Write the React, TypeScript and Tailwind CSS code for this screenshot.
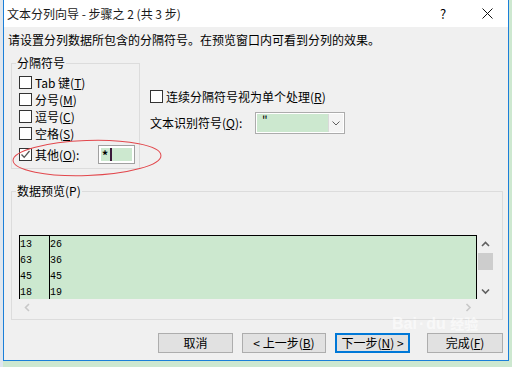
import { type ReactNode } from 'react'

const cjk = "font-['Noto_Sans_CJK_SC',sans-serif]"

function Box({ checked = false }: { checked?: boolean }) {
  return (
    <span className="flex h-[13px] w-[13px] shrink-0 items-center justify-center border border-[#333333] bg-white">
      {checked && (
        <svg width="11" height="11" viewBox="0 0 11 11">
          <path d="M1.5 5.5 L4.2 8.3 L9.5 2" fill="none" stroke="#555555" strokeWidth="1.3" />
        </svg>
      )}
    </span>
  )
}

function Check({ children, checked }: { children: ReactNode; checked?: boolean }) {
  return (
    <div className="flex h-[17px] items-center gap-[3px]">
      <Box checked={checked} />
      <span className="leading-[17px]">{children}</span>
    </div>
  )
}

function Group({ title, className, children }: { title: string; className: string; children: ReactNode }) {
  return (
    <div className={`relative border border-[#dcdcdc] ${className}`}>
      <span className="absolute -top-[9px] left-[4px] bg-[#f0f0f0] px-[1px] leading-[16px]">{title}</span>
      {children}
    </div>
  )
}

function Btn({ children, className = '', focused = false }: { children: ReactNode; className?: string; focused?: boolean }) {
  return (
    <div
      className={`flex h-[20px] items-center justify-center bg-[#e1e1e1] leading-[16px] ${
        focused ? 'border-2 border-[#0078d7]' : 'border border-[#adadad]'
      } ${className}`}
    >
      {children}
    </div>
  )
}

function Chevron({ dir, color = '#606060' }: { dir: 'up' | 'down' | 'left' | 'right'; color?: string }) {
  const d = {
    up: 'M1 6 L4.5 2.5 L8 6',
    down: 'M1 2.5 L4.5 6 L8 2.5',
    left: 'M6 1 L2.5 4.5 L6 8',
    right: 'M2.5 1 L6 4.5 L2.5 8',
  }[dir]
  return (
    <svg width="9" height="9" viewBox="0 0 9 9">
      <path d={d} fill="none" stroke={color} strokeWidth="1.6" />
    </svg>
  )
}

const rows = [
  ['13', '26'],
  ['63', '36'],
  ['45', '45'],
  ['18', '19'],
]

export default function App() {
  return (
    <div className={`relative flex h-[367px] w-[512px] overflow-hidden bg-[#cde8d0] text-[12px] text-black ${cjk}`}>
      <div className="w-[3px] shrink-0 bg-[#dfe6ee]" />
      <div className="flex h-[361px] w-[506px] shrink-0 flex-col border-x border-b border-[#1b7fd8] bg-[#f0f0f0]">
        <div className="flex h-[27px] items-center bg-white pl-[3px]">
          <span className="flex-1 leading-[16px] text-[#1a1a1a]">文本分列向导 - 步骤之 2 (共 3 步)</span>
          <span className="flex w-[46px] justify-center text-[13px]">?</span>
          <span className="flex w-[42px] justify-center">
            <svg width="11" height="11" viewBox="0 0 11 11">
              <path d="M0.5 0.5 L10.5 10.5 M10.5 0.5 L0.5 10.5" stroke="#111111" strokeWidth="1" />
            </svg>
          </span>
        </div>

        <p className="ml-[4px] mt-[5px] leading-[16px]">请设置分列数据所包含的分隔符号。在预览窗口内可看到分列的效果。</p>

        <div className="mt-[15px] flex">
          <Group title="分隔符号" className="ml-[7px] h-[106px] w-[129px] pl-[7px] pt-[10px]">
            <Check>
              Tab 键(<span className="underline">T</span>)
            </Check>
            <Check>
              分号(<span className="underline">M</span>)
            </Check>
            <Check>
              逗号(<span className="underline">C</span>)
            </Check>
            <Check>
              空格(<span className="underline">S</span>)
            </Check>
            <div className="mt-[3px] flex h-[19px] items-center gap-[3px]">
              <Box checked />
              <span className="w-[60px] leading-[17px]">
                其他(<span className="underline">O</span>):
              </span>
              <div className="flex h-[19px] w-[37px] border border-[#a0a0a0] bg-white p-[2px]">
                <div className="flex flex-1 items-center bg-[#cce8cf] pl-[1px] leading-[13px]">
                  <span className="font-bold">*</span>
                  <span className="ml-[2px] h-[13px] w-[2px] bg-[#3a1a3a]" />
                </div>
              </div>
            </div>
          </Group>

          <div className="ml-[10px] pt-[25px]">
            <Check>
              连续分隔符号视为单个处理(<span className="underline">R</span>)
            </Check>
            <div className="mt-[7px] flex items-center">
              <span className="w-[105px] leading-[16px]">
                文本识别符号(<span className="underline">Q</span>):
              </span>
              <div className="flex h-[22px] w-[90px] border border-[#acacac] bg-white p-[1px]">
                <div className="flex-1 bg-[#cce8cf] pl-[5px] leading-[12px]">"</div>
                <div className="flex w-[15px] items-center justify-center border-l border-[#d9d9d9] bg-[#f4f4f4]">
                  <svg width="8" height="5" viewBox="0 0 8 5">
                    <path d="M0.5 0.5 L4 4 L7.5 0.5" fill="none" stroke="#606060" strokeWidth="1" />
                  </svg>
                </div>
              </div>
            </div>
          </div>
        </div>

        <Group title="数据预览(P)" className="ml-[7px] mt-[22px] h-[129px] w-[492px] pl-[7px] pt-[43px]">
          <div className="flex">
            <div className="flex h-[64px] w-[458px] border-x border-t border-black bg-[#cce8cf] pt-[1px] font-['Liberation_Mono',monospace] text-[10px]">
              <div className="w-[29px]">
                {rows.map((r) => (
                  <div key={r[0] + r[1]} className="h-[16px] leading-[16px]">
                    {r[0]}
                  </div>
                ))}
              </div>
              <div className="-mt-[1px] flex-1 border-l border-black pt-[1px]">
                {rows.map((r) => (
                  <div key={r[0] + r[1]} className="h-[16px] leading-[16px]">
                    {r[1]}
                  </div>
                ))}
              </div>
            </div>
            <div className="flex h-[64px] w-[17px] flex-col items-center pt-[5px]">
              <Chevron dir="up" />
              <div className="mt-[4px] h-[17px] w-[15px] bg-[#cdcdcd]" />
              <div className="mt-auto pb-[3px]">
                <Chevron dir="down" />
              </div>
            </div>
          </div>
          <div className="flex h-[17px] w-[458px] items-center justify-between px-[4px]">
            <Chevron dir="left" color="#c8c8c8" />
            <Chevron dir="right" color="#c8c8c8" />
          </div>
        </Group>

        <div className="mt-[13px] flex">
          <Btn className="ml-[154px] w-[75px]">取消</Btn>
          <Btn className="ml-[9px] w-[84px]">
            &lt; 上一步(<span className="underline">B</span>)
          </Btn>
          <Btn focused className="ml-[9px] w-[75px]">
            下一步(<span className="underline">N</span>) &gt;
          </Btn>
          <Btn className="ml-[17px] w-[76px]">
            完成(<span className="underline">F</span>)
          </Btn>
        </div>
      </div>

      <svg className="pointer-events-none absolute left-0 top-0" width="512" height="367">
        <ellipse cx="87" cy="158" rx="74" ry="17.5" fill="none" stroke="#e2474c" strokeWidth="1" transform="rotate(-2 87 158)" />
      </svg>

      <div className="pointer-events-none absolute left-[392px] top-[314px] font-['Liberation_Sans',sans-serif] text-[16px] font-bold leading-[18px] text-white/60">
        Bai<span className="mx-[2px]">·</span>du <span className={`${cjk} text-[14px]`}>经验</span>
      </div>
    </div>
  )
}
